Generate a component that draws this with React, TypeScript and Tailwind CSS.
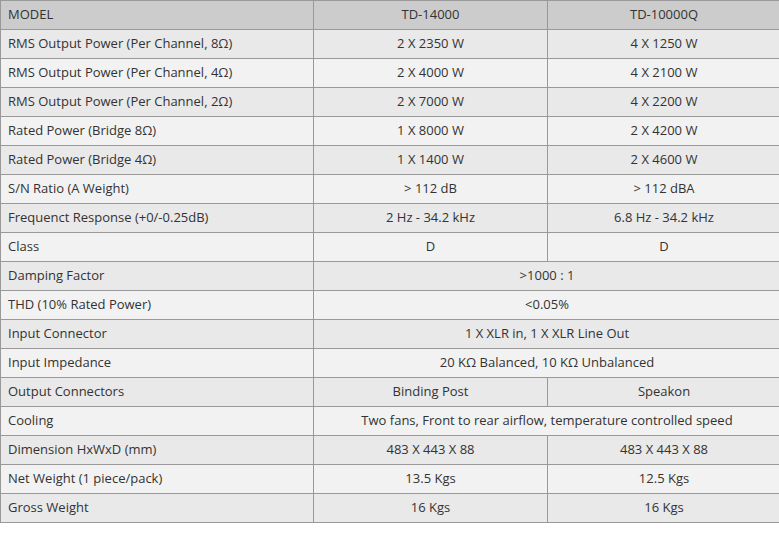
import React from "react";

type Row = { label: string; a: string; b?: string };

const rows: Row[] = [
  { label: "RMS Output Power (Per Channel, 8Ω)", a: "2 X 2350 W", b: "4 X 1250 W" },
  { label: "RMS Output Power (Per Channel, 4Ω)", a: "2 X 4000 W", b: "4 X 2100 W" },
  { label: "RMS Output Power (Per Channel, 2Ω)", a: "2 X 7000 W", b: "4 X 2200 W" },
  { label: "Rated Power (Bridge 8Ω)", a: "1 X 8000 W", b: "2 X 4200 W" },
  { label: "Rated Power (Bridge 4Ω)", a: "1 X 1400 W", b: "2 X 4600 W" },
  { label: "S/N Ratio (A Weight)", a: "> 112 dB", b: "> 112 dBA" },
  { label: "Frequenct Response (+0/-0.25dB)", a: "2 Hz - 34.2 kHz", b: "6.8 Hz - 34.2 kHz" },
  { label: "Class", a: "D", b: "D" },
  { label: "Damping Factor", a: ">1000 : 1" },
  { label: "THD (10% Rated Power)", a: "<0.05%" },
  { label: "Input Connector", a: "1 X XLR in, 1 X XLR Line Out" },
  { label: "Input Impedance", a: "20 KΩ Balanced, 10 KΩ Unbalanced" },
  { label: "Output Connectors", a: "Binding Post", b: "Speakon" },
  { label: "Cooling", a: "Two fans, Front to rear airflow, temperature controlled speed" },
  { label: "Dimension HxWxD (mm)", a: "483 X 443 X 88", b: "483 X 443 X 88" },
  { label: "Net Weight (1 piece/pack)", a: "13.5 Kgs", b: "12.5 Kgs" },
  { label: "Gross Weight", a: "16 Kgs", b: "16 Kgs" },
];

export default function App() {
  return (
    <div className="w-[779px] h-[540px] overflow-hidden bg-white">
      <table
        className="w-[780px] border-collapse table-fixed text-[13px] text-[#333333]"
        style={{ fontFamily: '"Open Sans", "Noto Sans", sans-serif' }}
      >
        <colgroup>
          <col className="w-[313px]" />
          <col className="w-[234px]" />
          <col className="w-[233px]" />
        </colgroup>
        <thead>
          <tr className="h-[29px] bg-[#cccccc]">
            <th className="border border-[#999999] px-[7px] text-left font-normal">MODEL</th>
            <th className="border border-[#999999] text-center font-normal">TD-14000</th>
            <th className="border border-[#999999] text-center font-normal">TD-10000Q</th>
          </tr>
        </thead>
        <tbody>
          {rows.map((r, i) => (
            <tr
              key={i}
              className={`h-[29px] ${i % 2 === 0 ? "bg-[#e9e9e9]" : "bg-[#f2f2f2]"}`}
            >
              <td className="border border-[#999999] px-[7px] text-left">{r.label}</td>
              {r.b === undefined ? (
                <td colSpan={2} className="border border-[#999999] text-center">
                  {r.a}
                </td>
              ) : (
                <>
                  <td className="border border-[#999999] text-center">{r.a}</td>
                  <td className="border border-[#999999] text-center">{r.b}</td>
                </>
              )}
            </tr>
          ))}
        </tbody>
      </table>
    </div>
  );
}
